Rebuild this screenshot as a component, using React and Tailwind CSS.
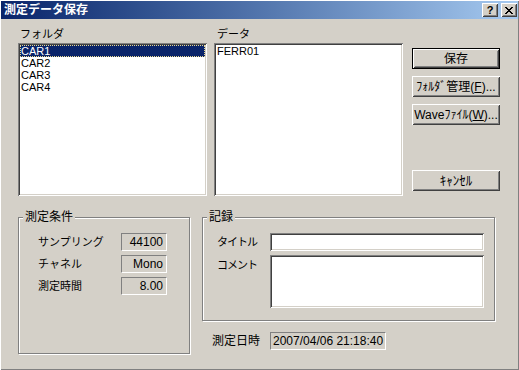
import React from 'react';

const raised = "shadow-[inset_1px_1px_#fff,inset_-1px_-1px_#404040,inset_2px_2px_#d4d0c8,inset_-2px_-2px_#808080]";
const sunken = "shadow-[inset_1px_1px_#808080,inset_-1px_-1px_#fff,inset_2px_2px_#404040,inset_-2px_-2px_#d4d0c8]";
const staticEdge = "border border-t-[#808080] border-l-[#808080] border-b-white border-r-white";
const etched = "relative border border-[#808080] shadow-[inset_1px_1px_#fff,1px_1px_#fff]";

const CloseGlyph = () => (
  <svg width="8" height="7" viewBox="0 0 8 7" shapeRendering="crispEdges" fill="#000">
    <rect x="0" y="0" width="2" height="1" />
    <rect x="6" y="0" width="2" height="1" />
    <rect x="1" y="1" width="2" height="1" />
    <rect x="5" y="1" width="2" height="1" />
    <rect x="2" y="2" width="4" height="1" />
    <rect x="3" y="3" width="2" height="1" />
    <rect x="2" y="4" width="4" height="1" />
    <rect x="1" y="5" width="2" height="1" />
    <rect x="5" y="5" width="2" height="1" />
    <rect x="0" y="6" width="2" height="1" />
    <rect x="6" y="6" width="2" height="1" />
  </svg>
);

const CaptionButton = ({ children }) => (
  <div className={`w-[16px] h-[14px] bg-[#d4d0c8] flex items-center justify-center ${raised}`}>{children}</div>
);

const Button = ({ children, primary, className = '' }) => (
  <div className={`h-[21px] w-[88px] flex items-center justify-center text-[12px] leading-[14px] bg-[#d4d0c8] ${primary ? 'border border-black' : ''} ${raised} ${className}`}>
    {children}
  </div>
);

const ListBox = ({ items, selected }) => (
  <div className={`h-[153px] bg-white p-[2px] ${sunken}`}>
    {items.map((it) => (
      <div
        key={it}
        className={`h-[12px] leading-[12px] pl-[1px] text-[11px] ${it === selected ? 'bg-[#0a246a] text-white outline outline-1 outline-dotted outline-[#e8d890] -outline-offset-1' : ''}`}
      >
        {it}
      </div>
    ))}
  </div>
);

const Group = ({ label, className, children }) => (
  <div className={`${etched} ${className}`}>
    <span className="absolute left-[4px] -top-[7px] px-[2px] bg-[#d4d0c8] text-[12px] leading-[12px]">{label}</span>
    {children}
  </div>
);

const ReadField = ({ value, className = '' }) => (
  <div className={`h-[18px] ${staticEdge} text-[12px] leading-[16px] ${className}`}>{value}</div>
);

export default function App() {
  return (
    <div className="w-[519px] h-[370px] overflow-hidden bg-[#d4d0c8] pt-[1px] px-[1px] text-black font-['Liberation_Sans','Noto_Sans_CJK_JP',sans-serif] shadow-[inset_1px_1px_#fff,inset_-1px_-1px_#808080]">
      <div className="h-[18px] flex items-center pl-[3px] pr-[1px] bg-linear-to-r from-[#0a246a] to-[#a6caf0]">
        <span className="flex-1 text-white font-bold text-[12px] leading-[18px]">測定データ保存</span>
        <div className="flex gap-[3px]">
          <CaptionButton>
            <span className="font-bold text-[11px] leading-[11px]">?</span>
          </CaptionButton>
          <CaptionButton>
            <CloseGlyph />
          </CaptionButton>
        </div>
      </div>

      <div className="pl-[17px] pt-[8px]">
        <div className="flex">
          <div className="w-[189px]">
            <div className="h-[16px] pl-[2px] text-[11px] leading-[14px]">フォルダ</div>
            <ListBox items={['CAR1', 'CAR2', 'CAR3', 'CAR4']} selected="CAR1" />
          </div>
          <div className="w-[189px] ml-[7px]">
            <div className="h-[16px] pl-[3px] text-[11px] leading-[14px]">データ</div>
            <ListBox items={['FERR01']} />
          </div>
          <div className="ml-[9px] pt-[21px] flex flex-col gap-[7px]">
            <Button primary>保存</Button>
            <Button>ﾌｫﾙﾀﾞ管理(<span className="underline">F</span>)...</Button>
            <Button>Waveﾌｧｲﾙ(<span className="underline">W</span>)...</Button>
            <div className="mt-[38px]">
              <Button className="text-[13px]">ｷｬﾝｾﾙ</Button>
            </div>
          </div>
        </div>

        <div className="mt-[21px] flex items-start">
          <Group label="測定条件" className="w-[172px] h-[137px]">
            <div className="pt-[15px] pl-[19px] flex flex-col gap-[4px]">
              {[
                ['サンプリング', '44100'],
                ['チャネル', 'Mono'],
                ['測定時間', '8.00'],
              ].map(([k, v]) => (
                <div key={k} className="flex items-center h-[18px]">
                  <span className="w-[83px] text-[11px] leading-[14px]">{k}</span>
                  <ReadField value={v} className="w-[46px] text-right pr-[3px]" />
                </div>
              ))}
            </div>
          </Group>

          <div className="ml-[12px] flex flex-col">
            <Group label="記録" className="w-[293px] h-[104px]">
              <div className="pt-[15px] pl-[14px] flex flex-col gap-[4px]">
                <div className="flex items-center h-[18px]">
                  <span className="w-[53px] text-[11px] leading-[14px] tracking-[-1px]">タイトル</span>
                  <div className={`w-[214px] h-[18px] bg-white ${sunken}`} />
                </div>
                <div className="flex items-start">
                  <span className="w-[53px] pt-[3px] text-[11px] leading-[14px] tracking-[-1px]">コメント</span>
                  <div className={`w-[214px] h-[53px] bg-white ${sunken}`} />
                </div>
              </div>
            </Group>
            <div className="mt-[11px] pl-[10px] flex items-center h-[18px]">
              <span className="w-[58px] text-[12px] leading-[14px]">測定日時</span>
              <ReadField value="2007/04/06 21:18:40" className="w-[116px] pl-[2px]" />
            </div>
          </div>
        </div>
      </div>
    </div>
  );
}
